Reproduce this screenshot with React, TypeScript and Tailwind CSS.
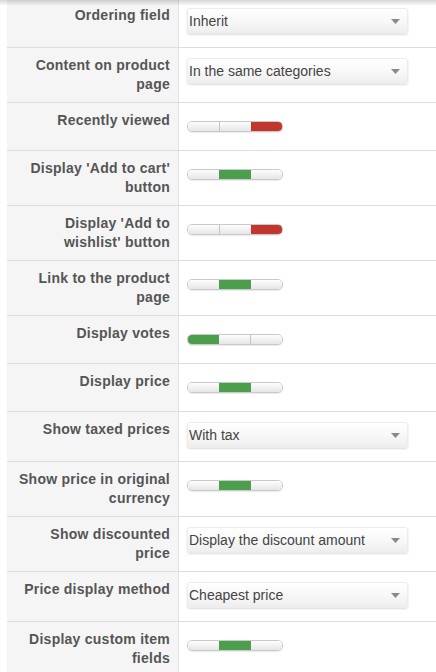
import React from "react";

type Toggle = { kind: "toggle"; state: 0 | 1 | 2 };
type Select = { kind: "select"; value: string };
type Row = { label: string; field: Toggle | Select };

const rows: Row[] = [
  { label: "Ordering field", field: { kind: "select", value: "Inherit" } },
  { label: "Content on product page", field: { kind: "select", value: "In the same categories" } },
  { label: "Recently viewed", field: { kind: "toggle", state: 2 } },
  { label: "Display 'Add to cart' button", field: { kind: "toggle", state: 1 } },
  { label: "Display 'Add to wishlist' button", field: { kind: "toggle", state: 2 } },
  { label: "Link to the product page", field: { kind: "toggle", state: 1 } },
  { label: "Display votes", field: { kind: "toggle", state: 0 } },
  { label: "Display price", field: { kind: "toggle", state: 1 } },
  { label: "Show taxed prices", field: { kind: "select", value: "With tax" } },
  { label: "Show price in original currency", field: { kind: "toggle", state: 1 } },
  { label: "Show discounted price", field: { kind: "select", value: "Display the discount amount" } },
  { label: "Price display method", field: { kind: "select", value: "Cheapest price" } },
  { label: "Display custom item fields", field: { kind: "toggle", state: 1 } },
];

function TriToggle({ state }: { state: 0 | 1 | 2 }) {
  // three-position switch: left = on (green), middle = inherit (green), right = off (red)
  const segs = [0, 1, 2];
  return (
    <div className="flex h-[11px] w-[96px] overflow-hidden rounded-[5px] border border-[#c9c9c9] shadow-[0_1px_1px_rgba(0,0,0,0.08)]">
      {segs.map((i) => {
        const active = i === state;
        const color =
          active && state === 2
            ? "bg-[#c1372d]"
            : active
            ? "bg-[#4b9e4b]"
            : "bg-gradient-to-b from-[#fdfdfd] to-[#e6e6e6]";
        const divider = i < 2 && !active && i + 1 !== state ? "border-r border-r-[#c4c4c4]" : "";
        return <div key={i} className={`h-full flex-1 ${color} ${divider}`} />;
      })}
    </div>
  );
}

function FakeSelect({ value }: { value: string }) {
  return (
    <div className="flex h-[26px] w-[221px] items-center justify-between rounded-[3px] border border-[#ececec] bg-gradient-to-b from-[#ffffff] via-[#f8f8f8] to-[#eeeeee] pl-[1px] pr-[6px] text-[14px] leading-none text-[#444] shadow-[0_1px_2px_rgba(0,0,0,0.14)]">
      <span>{value}</span>
      <svg width="9" height="5" viewBox="0 0 9 5" className="mr-[1px]">
        <path d="M0 0 H9 L4.5 5 Z" fill="#8a8a8a" />
      </svg>
    </div>
  );
}

export default function App() {
  return (
    <div
      className="relative h-[672px] w-[436px] overflow-hidden bg-white"
      style={{ fontFamily: '"Liberation Sans", Arial, sans-serif' }}
    >
      <div className="-mt-[2px] ml-[7px]">
        {rows.map((r, idx) => (
          <div key={idx} className="flex border-b border-[#dddddd]">
            <div className="w-[172px] shrink-0 border-r border-[#e3e3e3] bg-[#f5f5f5] py-[8px] pl-[8px] pr-[8px] text-right text-[14px] font-bold leading-[19px] tracking-[0.25px] text-[#555555]">
              {r.label}
            </div>
            <div className="flex-1 pl-[8px]">
              {r.field.kind === "select" ? (
                <div className="pt-[10px] pb-[13px]">
                  <FakeSelect value={r.field.value} />
                </div>
              ) : (
                <div className="h-[47px] pt-[18px]">
                  <TriToggle state={r.field.state} />
                </div>
              )}
            </div>
          </div>
        ))}
      </div>
      <div className="pointer-events-none absolute left-0 top-0 h-[6px] w-full bg-gradient-to-b from-[rgba(0,0,0,0.16)] to-transparent" />
    </div>
  );
}
